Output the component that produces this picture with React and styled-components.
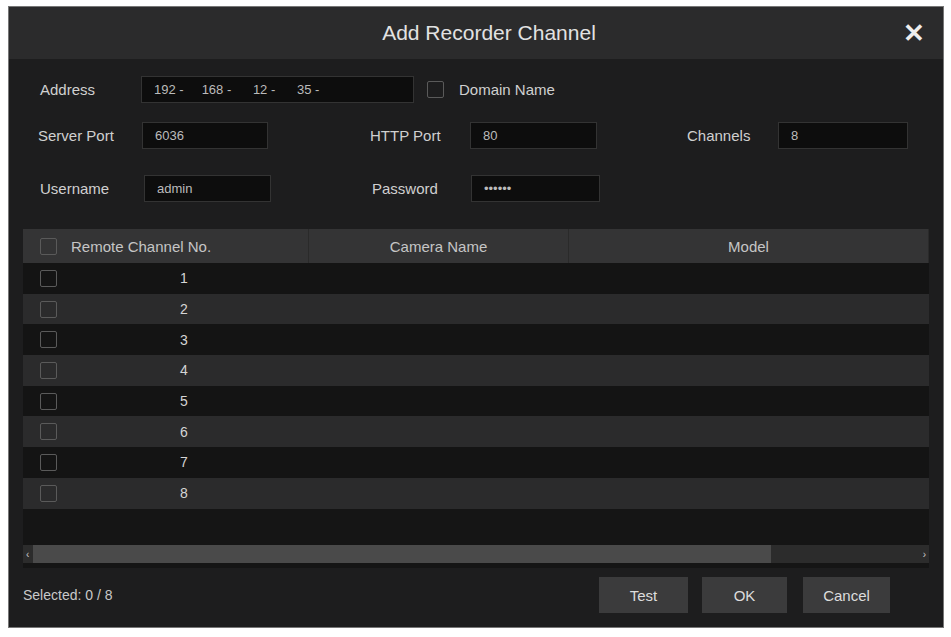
import React from "react";
import styled, { createGlobalStyle } from "styled-components";

const G = createGlobalStyle`
  body{margin:0;background:#fff;font-family:"Liberation Sans","Open Sans",sans-serif;}
`;
const Dialog = styled.div`
  margin:6px 7px 0 8px;width:936px;height:622px;background:#1d1d1e;
  border:1px solid #777;box-sizing:border-box;display:flex;flex-direction:column;color:#c9c9c9;
`;
const Title = styled.div`
  height:52px;background:#2b2b2c;display:flex;align-items:center;justify-content:center;position:relative;
  font-size:21px;color:#e2e2e2;padding-left:26px;
`;
const Close = styled.div`position:absolute;right:18px;top:11px;font-size:26px;font-weight:bold;color:#eee;`;
const Form = styled.div`display:flex;flex-direction:column;padding:17px 0 0 29px;`;
const FRow = styled.div`display:flex;align-items:center;height:27px;margin-top:${p=>p.mt||0}px;`;
const Label = styled.div`font-size:15px;color:#d0d0d0;width:${p=>p.w}px;margin-left:${p=>p.ml||0}px;flex:none;white-space:nowrap;`;
const Input = styled.div`
  height:27px;width:${p=>p.w}px;background:#0d0d0d;border:1px solid #333;box-sizing:border-box;flex:none;
  font-size:13px;color:#bbb;display:flex;align-items:center;padding-left:12px;gap:${p=>p.gap||0}px;
`;
const Check = styled.span`display:inline-block;width:17px;height:17px;border:1.5px solid #5a5a5a;border-radius:2px;box-sizing:border-box;flex:none;`;
const Table = styled.div`margin:27px 14px 0 14px;height:339px;background:#151515;display:flex;flex-direction:column;`;
const Header = styled.div`display:grid;grid-template-columns:286px 260px 1fr;height:34px;background:#343435;font-size:15px;color:#c5c5c5;`;
const HCell = styled.div`display:flex;align-items:center;justify-content:${p=>p.left?"flex-start":"center"};gap:14px;padding-left:${p=>p.left?17:0}px;border-right:1px solid #2a2a2a;`;
const Row = styled.div`height:30.7px;display:flex;align-items:center;background:${p=>p.alt?"#2b2b2c":"#141414"};font-size:14px;`;
const Num = styled.span`margin-left:123px;color:#d5d5d5;`;
const Scroll = styled.div`margin-top:auto;margin-bottom:5px;height:18px;display:flex;align-items:center;background:#2c2c2c;position:relative;`;
const Thumb = styled.div`width:738px;height:18px;background:#4a4a4a;margin-left:10px;`;
const Foot = styled.div`display:flex;align-items:center;padding:9px 0 0 14px;`;
const Btn = styled.div`width:${p=>p.w}px;height:36px;background:#3b3b3c;display:flex;align-items:center;justify-content:center;font-size:15px;color:#ddd;margin-left:${p=>p.ml}px;`;

export default function App(){
  return <><G/><Dialog>
    <Title>Add Recorder Channel<Close>✕</Close></Title>
    <Form>
      <FRow><Label w={101} ml={2}>Address</Label>
        <Input w={273} gap={18}><span>192 -</span><span>168 -</span><span>&nbsp;12 -</span><span>&nbsp;35 -</span></Input>
        <Check style={{marginLeft:13}}/><Label w={140} ml={15}>Domain Name</Label></FRow>
      <FRow mt={19}><Label w={104}>Server Port</Label><Input w={126}>6036</Input>
        <Label w={100} ml={102}>HTTP Port</Label><Input w={127}>80</Input>
        <Label w={91} ml={90}>Channels</Label><Input w={130}>8</Input></FRow>
      <FRow mt={26}><Label w={104} ml={2}>Username</Label><Input w={127}>admin</Input>
        <Label w={99} ml={101}>Password</Label><Input w={129}>••••••</Input></FRow>
    </Form>
    <Table>
      <Header><HCell left><Check/>Remote Channel No.</HCell><HCell>Camera Name</HCell><HCell>Model</HCell></Header>
      {[1,2,3,4,5,6,7,8].map(n=><Row key={n} alt={n%2===0}><Check style={{marginLeft:17}}/><Num>{n}</Num></Row>)}
      <Scroll><span style={{position:"absolute",left:3,fontSize:10}}>‹</span><Thumb/><span style={{position:"absolute",right:3,fontSize:10}}>›</span></Scroll>
    </Table>
    <Foot>
      <span style={{fontSize:14,width:576}}>Selected: 0 / 8</span>
      <Btn w={89} ml={0}>Test</Btn><Btn w={85} ml={14}>OK</Btn><Btn w={87} ml={16}>Cancel</Btn>
    </Foot>
  </Dialog></>;
}
